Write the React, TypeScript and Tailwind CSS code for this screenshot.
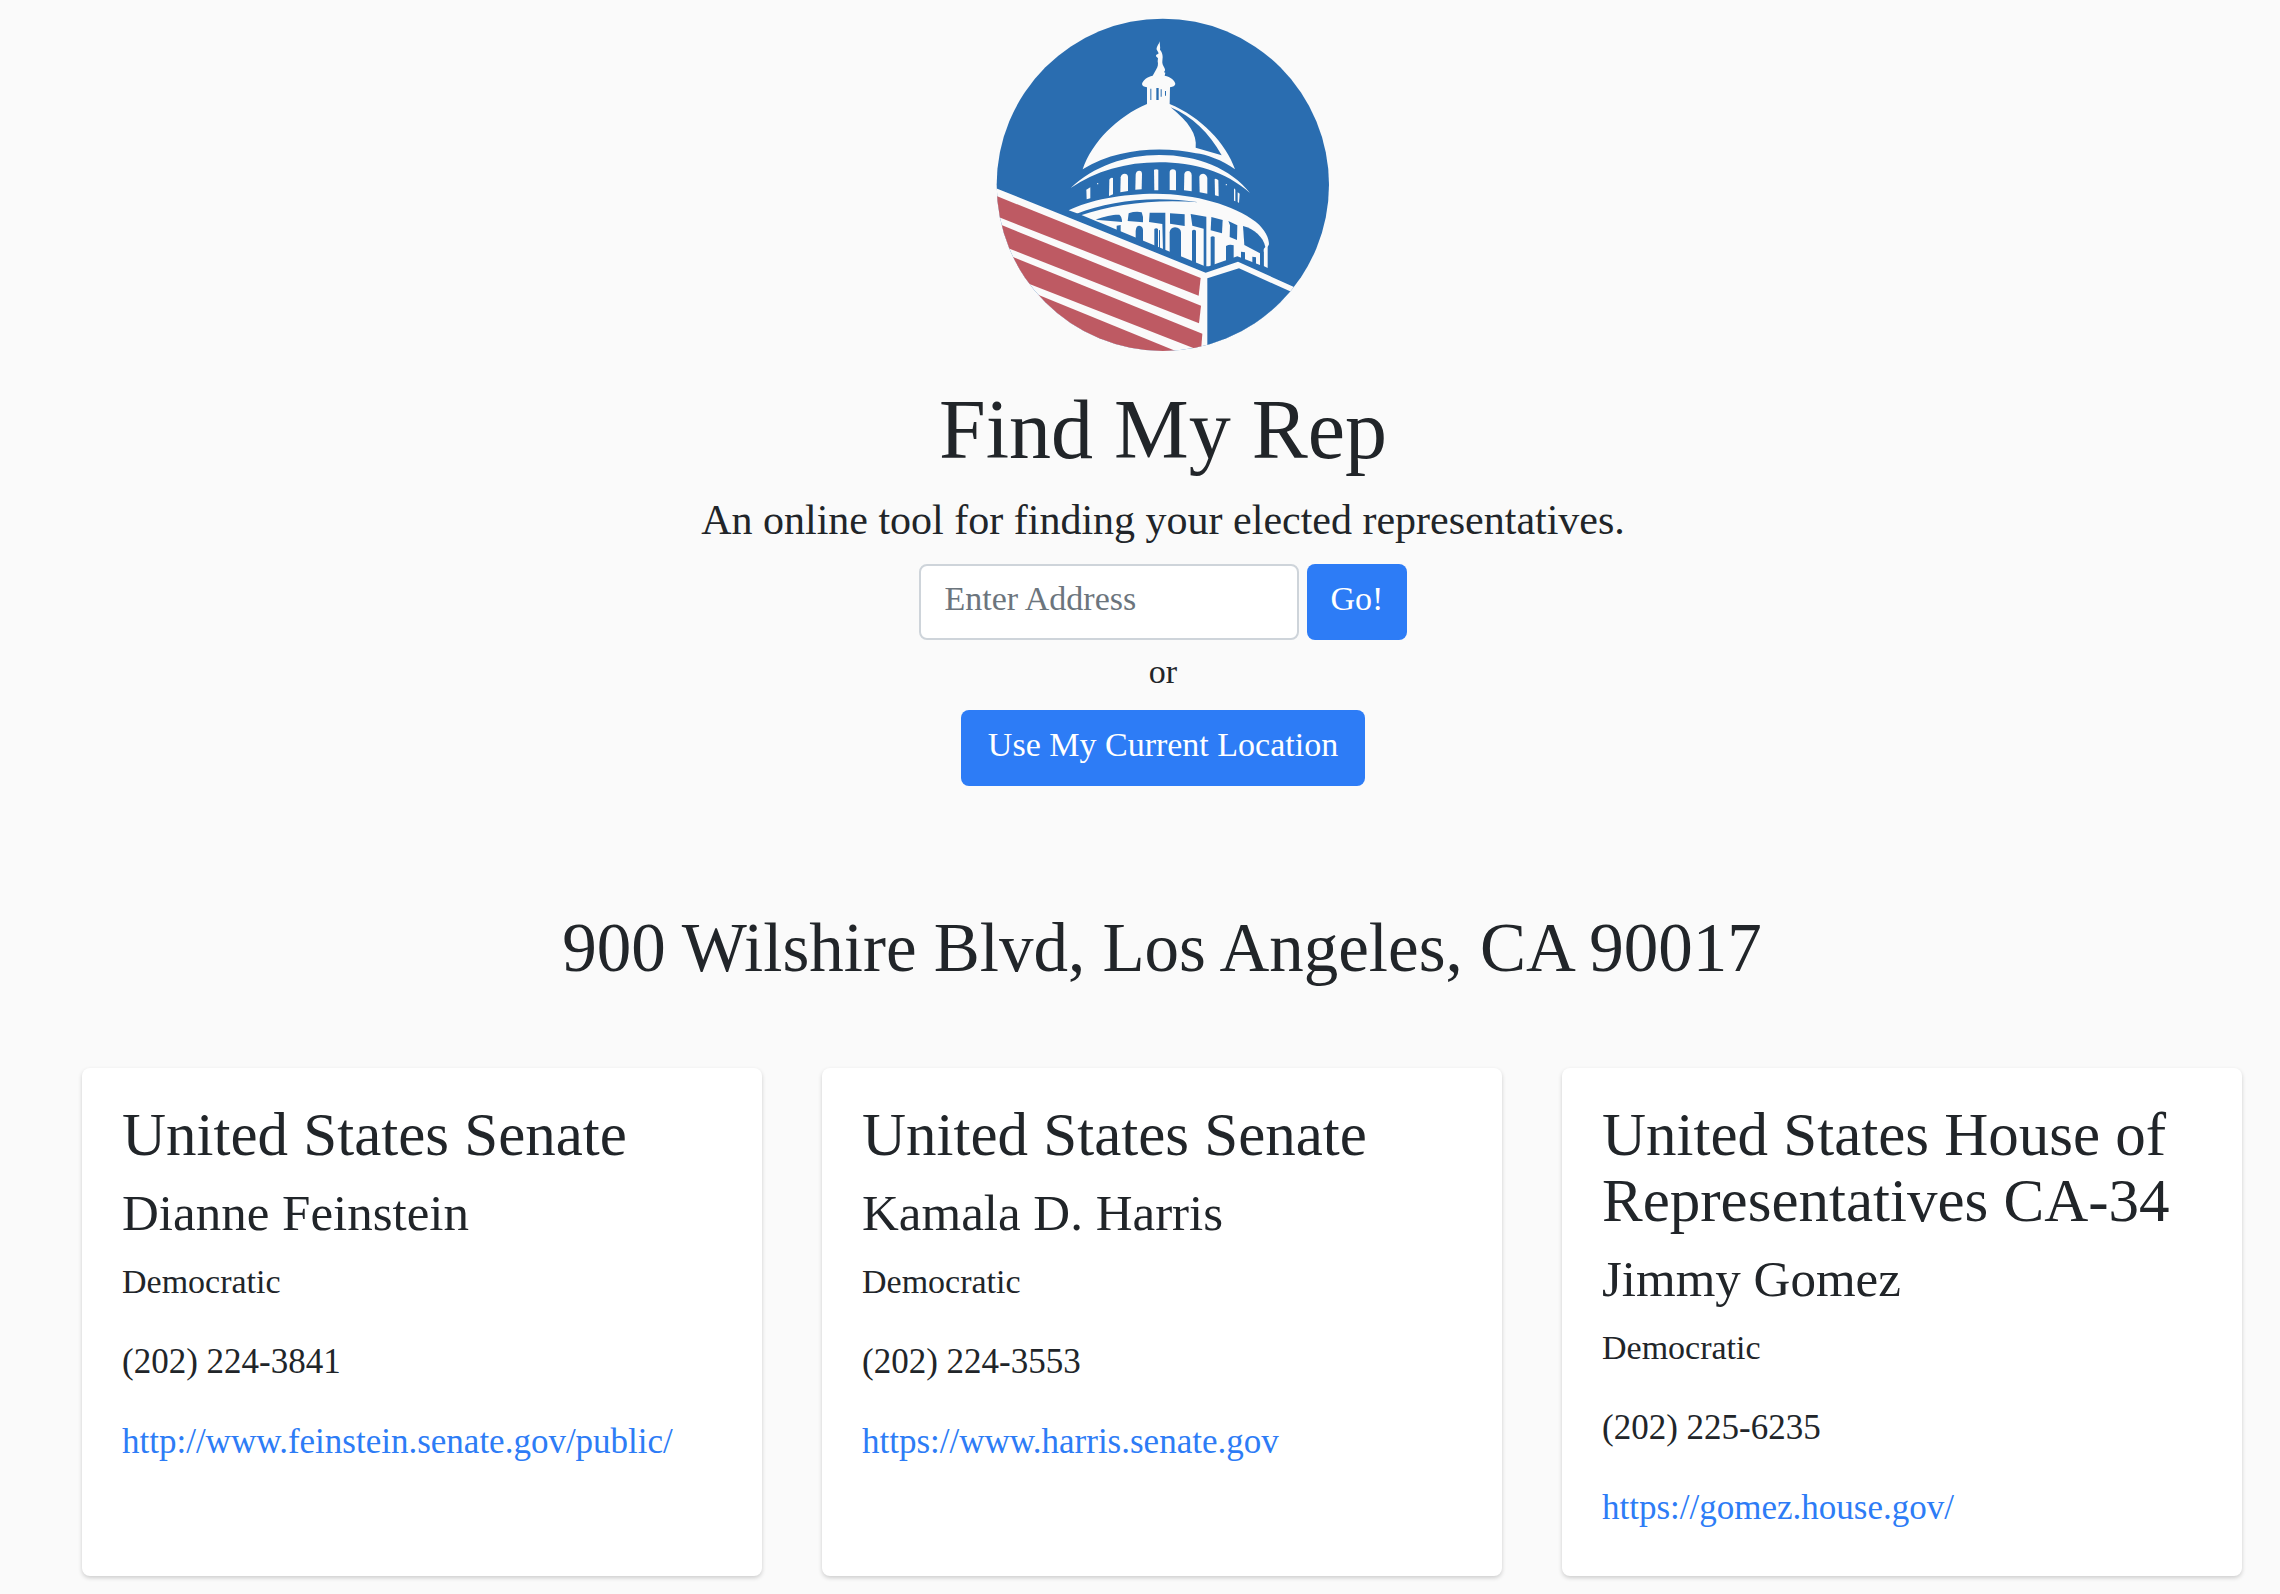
import React from "react";

const BLUE = "#2a6db0";
const RED = "#be5a63";
const PAPER = "#fafafa";

type Rep = {
  office: string;
  name: string;
  party: string;
  phone: string;
  url: string;
};

const reps: Rep[] = [
  {
    office: "United States Senate",
    name: "Dianne Feinstein",
    party: "Democratic",
    phone: "(202) 224-3841",
    url: "http://www.feinstein.senate.gov/public/",
  },
  {
    office: "United States Senate",
    name: "Kamala D. Harris",
    party: "Democratic",
    phone: "(202) 224-3553",
    url: "https://www.harris.senate.gov",
  },
  {
    office: "United States House of Representatives CA-34",
    name: "Jimmy Gomez",
    party: "Democratic",
    phone: "(202) 225-6235",
    url: "https://gomez.house.gov/",
  },
];

function CapitolLogo() {
  return (
    <svg viewBox="51 54 1002 1002" className="block w-[334px]" role="img" aria-label="Capitol dome">
      <defs>
        <clipPath id="disc">
          <circle cx="551.5" cy="554.5" r="498.5" />
        </clipPath>
      </defs>
      <g clipPath="url(#disc)">
        <rect x="40" y="40" width="1030" height="1030" fill={BLUE} />
        {/* wall edge */}
        <path d="M30 556 L680 818 L777 785 L1000 886 V1100 H30 Z" fill={PAPER} />
        <path d="M685 835 L780 805 L1000 904 V1100 H685 Z" fill={BLUE} />
        {/* stripes */}
        <g fill={RED}>
          <path d="M20 575 L665 834 L659 887 L20 636 Z" />
          <path d="M20 656 L666 917 L660 970 L20 718 Z" />
          <path d="M20 738 L670 1001 L666 1053 L20 801 Z" />
          <path d="M20 820 L600 1057 L20 1100 Z" />
        </g>
      </g>

      {/* statue, cupola and dome */}
      <g fill={PAPER}>
        <path d="M543 124 C541 134 545 141 543 149 C548 154 551 163 551 171 L550 184 C549 190 552 197 556 203 C560 209 558 214 554 216 L559 218 L557 227 C575 231 588 241 589 252 Q587 260 573 262 L572 312 C665 350 741 430 768 508 C730 480 680 463 651 460 C560 440 420 440 311 508 C340 425 415 350 504 312 V262 Q490 260 489 252 C492 240 505 230 521 227 L531 209 C537 201 538 192 536 184 L537 175 L531 169 Q530 163 538 162 C540 154 531 152 533 144 C535 136 540 132 543 124 Z" />
        <path d="M275 564 C345 498 440 465 541 465 C655 465 755 505 813 579 C740 515 645 487 541 487 C440 487 350 513 275 564 Z" />
        <path d="M322 569 L334 562 V595 L323 598 Z" />
        <path d="M391 539 Q395 531 402 534 V583 L390 588 Z" />
        <path d="M425 532 Q427 521 437 521 Q446 521 447 530 V573 L424 577 Z" />
        <path d="M470 524 Q471 512 481 512 Q489 512 489 522 L488 568 L469 569 Z" />
        <path d="M525 509 Q532 507 538 509 V571 H526 Z" />
        <path d="M572 516 Q573 508 581 508 Q591 508 591 517 V571 L572 570 Z" />
        <path d="M616 522 Q618 513 627 513 Q637 514 638 525 V574 L615 571 Z" />
        <path d="M661 530 Q663 521 673 521 Q683 523 685 534 V581 L662 577 Z" />
        <path d="M707 537 Q713 535 718 541 L719 589 L708 586 Z" />
        <path d="M765 565 L769 569 V604 L765 602 Z" />
        <path d="M776 577 L782 581 L780 609 L776 606 Z" />
        <circle cx="356" cy="551" r="2" />
        <circle cx="742" cy="554" r="2" />
        {/* colonnade */}
        <path d="M269 631 C330 600 430 581 530 581 C650 582 765 615 830 665 C860 690 870 715 870 733 L866 741 V804 L854 798 V740 L843 760 V795 L775 769 L690 799 H678 L300 642 Z" />
      </g>

      <g fill={BLUE}>
        {/* shaded crescent on the dome */}
        <path d="M575 322 C630 366 655 405 650 443 L728 466 C690 398 640 350 575 322 Z" />
        {/* cupola slits */}
        <path d="M514 266 h3 v34 h-3 Z M532 264 h7 v36 h-7 Z M545 268 h3 v22 h-3 Z M558 273 h3 v14 h-3 Z" />
        {/* cornice groove */}
        <path d="M293 641 C390 603 520 585 660 607 C530 596 400 613 306 646 Z" />
        {/* upper openings */}
        <path d="M350 659 C378 648 405 643 421 644 Q429 650 429 666 Z" />
        <path d="M449 640 Q470 633 488 637 Q494 650 492 667 L446 663 Z" />
        <path d="M512 638 H559 V756 L552 753 L550 672 L510 666 Z" />
        <path d="M573 640 L617 643 V678 L573 671 Z" />
        <path d="M635 642 L682 650 V802 L674 799 V686 L640 677 Z" />
        <path d="M697 651 L731 660 L729 700 L695 691 Z" />
        <path d="M748 663 L775 676 L774 720 L752 711 L753 676 Z" />
        <path d="M792 678 C825 686 853 711 859 741 L843 760 L796 735 Z" />
        <path d="M843 755 H854 V800 L843 795 Z" />
        {/* lower openings */}
        <path d="M413 677 L425 675 V705 L413 700 Z" />
        <path d="M470 693 Q471 677 481 677 Q491 678 492 689 V733 L470 723 Z" />
        <path d="M526 687 Q532 682 537 687 V752 L526 747 Z" />
        <path d="M540 690 L543 691 V755 L540 753 Z" />
        <path d="M572 697 Q573 683 588 682 Q605 684 606 697 V782 L572 764 Z" />
        <path d="M639 692 Q645 687 651 692 V800 L639 788 Z" />
        <path d="M695 711 Q701 706 707 711 V800 H695 Z" />
        <path d="M741 738 Q752 732 764 736 V782 L741 790 Z" />
        <path d="M786 755 L798 757 V786 L786 781 Z" />
        <path d="M820 770 L831 772 V795 L820 790 Z" />
      </g>
    </svg>
  );
}

const buttonClass =
  "h-[76px] rounded-lg bg-[#2d7cf6] pb-1.5 text-[34px] leading-[48px] text-white hover:bg-[#1a6be8]";

function RepCard({ rep }: { rep: Rep }) {
  return (
    <article className="rounded-lg bg-white px-10 pt-[34px] pb-11 shadow-[0_2px_4px_rgba(0,0,0,0.18)]">
      <h3 className="text-[61px] leading-[66px]">{rep.office}</h3>
      <h4 className="mt-4 text-[51px] leading-[58px]">{rep.name}</h4>
      <p className="mt-4 text-[34px] leading-[48px]">{rep.party}</p>
      <p className="mt-8 text-[35px] leading-[48px]">{rep.phone}</p>
      <p className="mt-8 text-[35px] leading-[48px]">
        <a href={rep.url} className="text-[#2d7cf6] hover:underline">
          {rep.url}
        </a>
      </p>
    </article>
  );
}

export default function App() {
  return (
    <div className="min-h-screen bg-[#fafafa] pt-[18px] pr-[38px] pb-[18px] pl-[82px] font-['Liberation_Serif',serif] text-[#212529]">
      <header className="flex flex-col items-center pl-0.5">
        <CapitolLogo />
        <h1 className="mt-7 text-[84px] leading-[100px]">Find My Rep</h1>
        <p className="mt-2 text-[42px] leading-[64px]">
          An online tool for finding your elected representatives.
        </p>
        <form className="mt-3 flex gap-2" onSubmit={(e) => e.preventDefault()}>
          <input
            type="text"
            aria-label="Enter Address"
            placeholder="Enter Address"
            className="h-[76px] w-[380px] rounded-lg border-2 border-[#ced4da] bg-white px-6 pb-1.5 text-[34px] placeholder:text-[#6c757d]"
          />
          <button type="submit" className={"px-6 " + buttonClass}>
            Go!
          </button>
        </form>
        <p className="mt-2 text-[34px] leading-[48px]">or</p>
        <button type="button" className={"mt-3.5 px-[27px] " + buttonClass}>
          Use My Current Location
        </button>
      </header>
      <main>
        <h2 className="mt-[122px] text-center text-[69px] leading-[80px]">
          900 Wilshire Blvd, Los Angeles, CA 90017
        </h2>
        <section className="mt-20 grid grid-cols-3 gap-[60px]">
          {reps.map((rep) => (
            <RepCard key={rep.name} rep={rep} />
          ))}
        </section>
      </main>
    </div>
  );
}
